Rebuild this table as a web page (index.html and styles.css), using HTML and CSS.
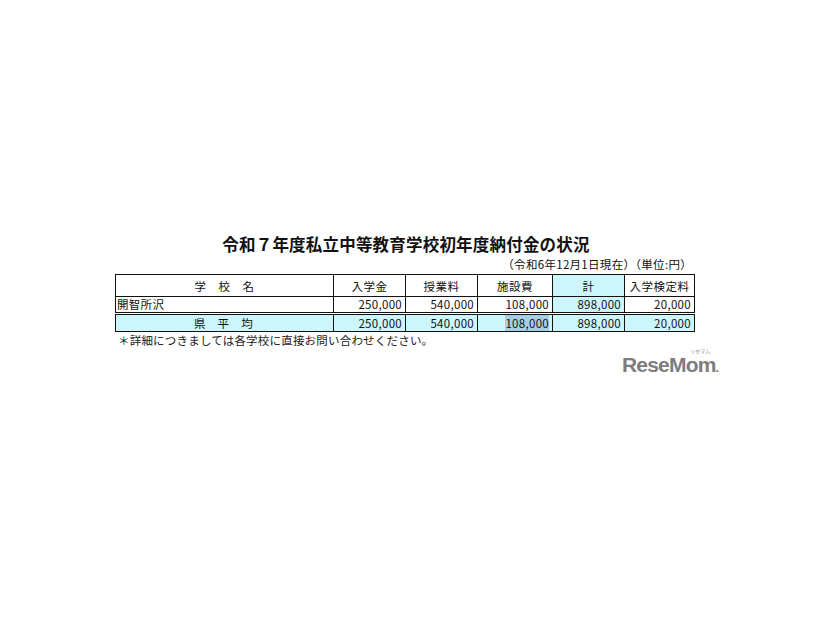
FILE: index.html
```html
<!DOCTYPE html>
<html lang="ja">
<head>
<meta charset="utf-8">
<link rel="stylesheet" href="styles.css">
</head>
<body>
<div class="page">
  <div class="sheet">
    <h1 class="title">令和７年度私立中等教育学校初年度納付金の状況</h1>
    <div class="unit">（令和6年12月1日現在）（単位:円）</div>
    <table class="fees">
      <colgroup>
        <col class="c-name"><col class="c-num"><col class="c-num"><col class="c-fac"><col class="c-num"><col class="c-exam">
      </colgroup>
      <tr class="head">
        <th>学　校　名</th>
        <th>入学金</th>
        <th>授業料</th>
        <th>施設費</th>
        <th class="cyan">計</th>
        <th>入学検定料</th>
      </tr>
      <tr class="row">
        <td class="name">開智所沢</td>
        <td>250,000</td>
        <td>540,000</td>
        <td>108,000</td>
        <td class="cyan">898,000</td>
        <td>20,000</td>
      </tr>
      <tr class="row avg">
        <td class="name center">県　平　均</td>
        <td>250,000</td>
        <td>540,000</td>
        <td><span class="sel">108,000</span></td>
        <td>898,000</td>
        <td>20,000</td>
      </tr>
    </table>
    <p class="note">＊詳細につきましては各学校に直接お問い合わせください。</p>
  </div>
  <div class="logo-row">
    <div class="logo"><span class="kana">リセマム</span>ReseMom<span class="dot">.</span></div>
  </div>
</div>
</body>
</html>
```
FILE: styles.css
```css
html, body {
  margin: 0;
  padding: 0;
  background: #ffffff;
}
body {
  font-family: "Noto Sans CJK JP", "Noto Sans", sans-serif;
  color: #111;
}
.page {
  width: 826px;
  height: 620px;
  padding-top: 233px;
  box-sizing: border-box;
}
.sheet {
  margin-left: 115px;
  width: 579px;
}
.title {
  margin: 0;
  font-size: 16.5px;
  font-weight: bold;
  text-align: center;
  line-height: 22px;
  letter-spacing: 0.2px;
  padding-left: 3px;
}
.unit {
  text-align: right;
  font-size: 11.5px;
  line-height: 14px;
  margin-top: 2px;
  margin-right: 2px;
  letter-spacing: 0.3px;
}
.fees {
  margin-top: 3px;
  width: 579px;
  table-layout: fixed;
  border-collapse: collapse;
  font-size: 11.5px;
}
.c-name { width: 218px; }
.c-num { width: 72px; }
.c-fac { width: 75px; }
.c-exam { width: 70px; }
.fees th, .fees td {
  border: 1px solid #111;
  padding: 0 3px;
  white-space: nowrap;
  overflow: hidden;
}
.fees th {
  font-weight: normal;
  height: 21px;
  text-align: center;
  letter-spacing: 0.5px;
}
.fees td {
  text-align: right;
  height: 15px;
  line-height: 15px;
  letter-spacing: 0.3px;
}
.fees td.name {
  text-align: left;
  padding-left: 1px;
}
.fees td.center {
  text-align: center;
}
.avg td {
  border-top: 3px double #111;
  background: #cdf6fa;
  height: 16px;
}
.cyan {
  background: #cdf6fa;
}
.sel {
  background: #a6cfe6;
  padding: 1px 0 2px;
}
.note {
  margin: 1px 0 0 3px;
  font-size: 11.5px;
  line-height: 14px;
  color: #222;
  letter-spacing: 0.2px;
}
.logo-row {
  margin-left: 622px;
  margin-top: 4px;
}
.logo {
  position: relative;
  display: inline-block;
  font-family: "Liberation Sans", Arial, sans-serif;
  font-weight: bold;
  font-size: 21px;
  line-height: 20px;
  color: #7d7d7d;
  letter-spacing: -0.8px;
  padding-top: 4px;
}
.dot {
  font-size: 12px;
}
.kana {
  position: absolute;
  right: 8px;
  top: -3px;
  font-family: "Noto Sans CJK JP", sans-serif;
  font-size: 5px;
  line-height: 6px;
  font-weight: normal;
  letter-spacing: 0;
  color: #888;
}
```
